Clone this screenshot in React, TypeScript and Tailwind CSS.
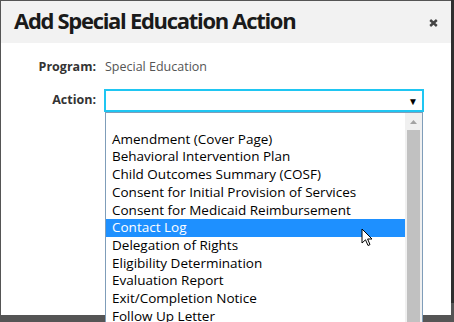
import React from "react";

const items = [
  "",
  "Amendment (Cover Page)",
  "Behavioral Intervention Plan",
  "Child Outcomes Summary (COSF)",
  "Consent for Initial Provision of Services",
  "Consent for Medicaid Reimbursement",
  "Contact Log",
  "Delegation of Rights",
  "Eligibility Determination",
  "Evaluation Report",
  "Exit/Completion Notice",
  "Follow Up Letter",
];

export default function App() {
  return (
    <div
      className="relative h-[322px] w-[454px] overflow-hidden bg-[#555555]"
      style={{ fontFamily: '"Open Sans", "Noto Sans", sans-serif' }}
    >
      <div className="absolute right-0 top-0 h-[303px] w-[3px] bg-[#2f2f2f]" />
      <div className="absolute left-[1px] top-[1px] h-[314px] w-[450px] bg-white">
        <div className="flex h-[42px] items-center justify-between bg-[#f2f2f2] pb-[4px] pl-[13px] pr-[13px]">
          <span className="text-[22px] font-bold leading-none tracking-[-1.3px] text-[#1a1a1a]">
            Add Special Education Action
          </span>
          <svg width="9" height="8" viewBox="0 0 9 8" className="mt-[6px]">
            <path d="M1.2 1 L7.8 7 M7.8 1 L1.2 7" stroke="#444" strokeWidth="2.4" strokeLinecap="butt" />
          </svg>
        </div>
        <div className="flex flex-col pt-[14px]">
          <div className="flex h-[20px] items-center">
            <div className="w-[95px] text-right text-[12.5px] font-bold text-[#333]">
              Program:
            </div>
            <div className="pl-[9px] text-[12.5px] text-[#555]">Special Education</div>
          </div>
          <div className="mt-[12px] flex items-center">
            <div className="w-[95px] text-right text-[12.5px] font-bold text-[#333]">Action:</div>
            <div className="ml-[8px] flex h-[23px] w-[320px] items-center justify-end border-2 border-[#1fc6f2] pr-[4px]">
              <span className="text-[10px] leading-none text-black">▼</span>
            </div>
          </div>
        </div>
      </div>
      <div className="absolute left-[105px] top-[112px] h-[220px] w-[318px] border border-[#7f9db9] bg-white">
        <div className="flex h-full">
          <div className="flex flex-1 flex-col">
            {items.map((t, i) => (
              <div
                key={i}
                className={
                  i === 6
                    ? "flex h-[17.7px] shrink-0 items-center bg-[#1e90ff] pl-[6px] text-[13.5px] leading-none text-white"
                    : "flex h-[17.7px] shrink-0 items-center pl-[6px] text-[13.5px] leading-none text-black"
                }
              >
                {t}
              </div>
            ))}
          </div>
          <div className="flex w-[17px] flex-col bg-[#f0f0f0]">
            <div className="flex h-[17px] items-center justify-center">
              <svg width="7" height="4" viewBox="0 0 7 4">
                <path d="M0 4 L3.5 0 L7 4 Z" fill="#a3a3a3" />
              </svg>
            </div>
            <div className="mx-[2px] flex-1 bg-[#c1c1c1]" />
          </div>
        </div>
      </div>
      <svg
        className="absolute left-[361px] top-[228px]"
        width="13"
        height="20"
        viewBox="0 0 13 20"
      >
        <path
          d="M1 1 L1 15 L4.5 11.8 L7 17.5 L9 16.6 L6.6 11 L11 11 Z"
          fill="white"
          stroke="black"
          strokeWidth="1"
          strokeLinejoin="miter"
        />
      </svg>
    </div>
  );
}
